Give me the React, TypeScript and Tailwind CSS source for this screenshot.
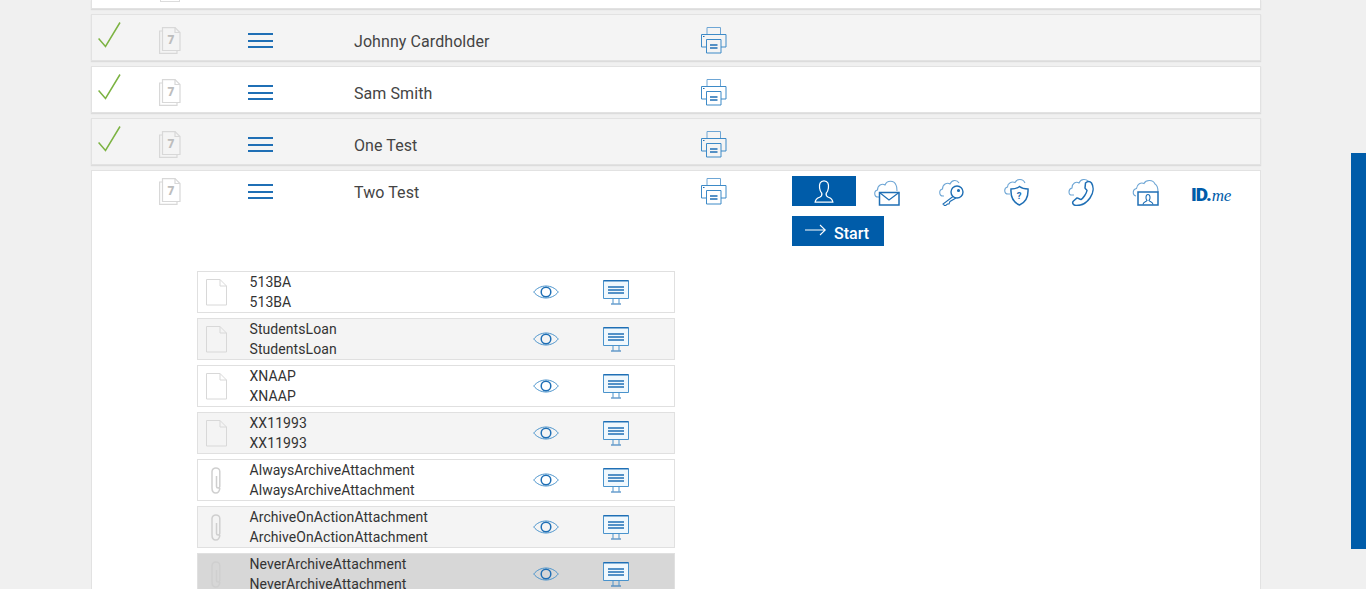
const blue = '#1f6fb5'

function Check() {
  return (
    <svg width="23" height="26" viewBox="0 0 23 26" fill="none" stroke="#7cb342" strokeWidth="1.5">
      <path d="M.6 16.5 L7.5 24.5 L22 .5" />
    </svg>
  )
}

function DocStack() {
  return (
    <svg width="22" height="27" viewBox="0 0 22 27" fill="none" stroke="#d8d8d8" strokeWidth="1.2">
      <path d="M3.5 4 H.6 V26.4 H18 V23.5" />
      <path d="M3.5 .6 H16 L21 5.5 V23.5 H3.5 Z" />
      <path d="M16 .6 V5.5 H21" />
      <text x="8.5" y="16.5" fontSize="12" fontWeight="900" fill="#bdbdbd" stroke="none" fontFamily="Roboto, sans-serif">7</text>
    </svg>
  )
}

function Menu() {
  return (
    <div className="flex flex-col gap-[4.5px] w-[25px]">
      <div className="h-[2px] bg-[#1f6fb5]" />
      <div className="h-[2px] bg-[#1f6fb5]" />
      <div className="h-[2px] bg-[#1f6fb5]" />
    </div>
  )
}

function Printer() {
  return (
    <svg width="26" height="27" viewBox="0 0 26 27" fill="none" stroke="#3d8ac7" strokeWidth="1">
      <path d="M6 7 V.5 H19.5 V7" stroke="#6ea6d5" />
      <path d="M5 20 H.5 V7.5 H25 V20 H20" />
      <path d="M5.5 12.5 H20 V26 H5.5 Z" />
      <path d="M9 18 H16.5 M9 21 H16.5" stroke={blue} strokeWidth="1.4" />
      <path d="M2 9.5 H3.5" stroke={blue} />
    </svg>
  )
}

function Icon({ children }: { children: React.ReactNode }) {
  return (
    <svg width="28" height="28" viewBox="0 0 28 28" fill="none" stroke={blue} strokeWidth="1.1">
      {children}
    </svg>
  )
}

function Person() {
  return (
    <svg width="20" height="23" viewBox="0 0 22 26" fill="none" stroke="#fff" strokeWidth="1.4">
      <path d="M11 1 C6.5 1 5.5 5 6 9 C6.4 12 7.5 14 8.5 15 C9 17 8.5 18.5 6 19.5 C3 20.5 1.5 21.5 1 25 H21 C20.5 21.5 19 20.5 16 19.5 C13.5 18.5 13 17 13.5 15 C14.5 14 15.6 12 16 9 C16.5 5 15.5 1 11 1 Z" />
    </svg>
  )
}

function CloudMail() {
  return (
    <Icon>
      <path d="M6 19 H5 C1 19 .5 13 4.5 12 C4.5 7.5 9 5 12 7 C14 2 21 2 23 7 C24 8.5 24 10 24 13" stroke="#6ea6d5" />
      <path d="M6.5 14.5 H26 V27 H6.5 Z" strokeWidth="1.5" />
      <path d="M6.5 14.5 L16 22 L26 14.5" strokeWidth="1.2" />
    </Icon>
  )
}

function CloudKey() {
  return (
    <Icon>
      <path d="M6 18 H5 C1 18 .5 12 4.5 11 C4.5 6.5 9 4 12 6 C14 1.5 19 1.5 21 5" stroke="#6ea6d5" />
      <circle cx="19" cy="14" r="6" strokeWidth="1.4" />
      <circle cx="20.5" cy="12.5" r="1" fill={blue} />
      <path d="M15 18.5 L5 26 L7 28 L9.5 26 L11 26 L12 23.5 L18 20" />
    </Icon>
  )
}

function CloudShield() {
  return (
    <Icon>
      <path d="M7 16 H5 C1 16 .5 10 4.5 9 C4.5 5 9 3 12 4.5 C14 .5 20 .5 22 5" stroke="#6ea6d5" />
      <path d="M8 11 C11 11 14 10.5 16.5 8.5 C19 10.5 22 11 25 11 C25.5 19 22.5 24.5 16.5 27 C10.5 24.5 7.5 19 8 11 Z" strokeWidth="1.5" />
      <text x="13.8" y="21" fontSize="9.5" fontWeight="700" fill={blue} stroke="none" fontFamily="Roboto, sans-serif">?</text>
    </Icon>
  )
}

function CloudPhone() {
  return (
    <Icon>
      <path d="M7 17 H5 C1 17 1 11 5 10 C5 5.5 9 3 12 5 C14 .5 19 1 21 3" stroke="#6ea6d5" />
      <path d="M18.5 5 C20.5 3 23 3 24.5 5 C27 9 26.5 15 23 20 C19.5 25 14 27.5 9.5 27.5 C6.5 27.5 4.5 25 6.5 23 L10 20 C11 19.5 12.5 21.5 14 21.5 C16 20.5 19.5 15.5 20 12.5 C19.5 11.5 18.5 11 18 10 Z" strokeWidth="1.5" />
    </Icon>
  )
}

function CloudContact() {
  return (
    <Icon>
      <path d="M4 18 C0 17 .5 11 4.5 10.5 C5 6 9 4 12 5.5 C14 1.5 21 1.5 23 6 C25 7 26 9 26 14" stroke="#6ea6d5" />
      <path d="M6 14 H26 V27 H6 Z" fill="#fff" strokeWidth="1.5" />
      <path d="M11 26.5 C11 24 14 24 15 22.5 C13.5 21 13.5 16.5 16 16.5 C18.5 16.5 18.5 21 17 22.5 C18 24 21 24 21 26.5" />
    </Icon>
  )
}

function Eye() {
  return (
    <svg width="26" height="16" viewBox="0 0 26 16" fill="none" stroke="#4a93cc" strokeWidth="1">
      <path d="M.7 8 C7 0 19 0 25.3 8 C19 16 7 16 .7 8 Z" />
      <circle cx="13" cy="8" r="4.8" stroke="#1f6fb5" strokeWidth="1.5" />
    </svg>
  )
}

function Monitor() {
  return (
    <svg width="26" height="25" viewBox="0 0 26 25" fill="none" stroke="#1f6fb5">
      <path d="M.5 .7 H25.5 V18.5 H.5 Z" fill="#f0f8fd" stroke="#4a93cc" />
      <path d="M.5 .7 H25.5" strokeWidth="1.4" />
      <path d="M5 7 H21 M5 10 H21 M5 13 H21" strokeWidth="1.4" />
      <path d="M10 18.5 V23.5 M16 18.5 V23.5" stroke="#4a93cc" />
      <path d="M8 24 H18" />
    </svg>
  )
}

function PageIcon() {
  return (
    <svg width="21" height="27" viewBox="0 0 21 27" fill="none" stroke="#d8d8d8" strokeWidth="1">
      <path d="M.5 .5 H14 L20.5 7 V26 H.5 Z" />
      <path d="M14 .5 V7 H20.5" />
    </svg>
  )
}

function Clip() {
  return (
    <svg width="10" height="27" viewBox="0 0 10 27" fill="none" stroke="#cfcfcf" strokeWidth="1.5">
      <path d="M5.5 9 V19.5 C5.5 21.5 8.8 21.5 8.8 19.5 V4.5 C8.8 -.3 1 -.3 1 4.5 V21 C1 27.7 8.8 27.7 8.8 21" />
    </svg>
  )
}

function Row({ name, alt, done = true }: { name: string; alt?: boolean; done?: boolean }) {
  return (
    <div className={`h-[47px] border border-[#e2e2e2] shadow-[0_1px_1px_#dcdcdc] flex items-start ${alt ? 'bg-[#f4f4f4]' : 'bg-white'}`}>
      <div className="w-[67px] pl-[6px] pt-[7px]">{done && <Check />}</div>
      <div className="w-[89px] pt-[12px]"><DocStack /></div>
      <div className="w-[106px] pt-[18px]"><Menu /></div>
      <div className="w-[347px] pt-[15px] text-[16px] leading-[24px] tracking-[0.08px] text-[#444]">{name}</div>
      <div className="pt-[12px]"><Printer /></div>
    </div>
  )
}

const docs = [
  { name: '513BA', icon: 'page', bg: 'bg-white' },
  { name: 'StudentsLoan', icon: 'page', bg: 'bg-[#f4f4f4]' },
  { name: 'XNAAP', icon: 'page', bg: 'bg-white' },
  { name: 'XX11993', icon: 'page', bg: 'bg-[#f4f4f4]' },
  { name: 'AlwaysArchiveAttachment', icon: 'clip', bg: 'bg-white' },
  { name: 'ArchiveOnActionAttachment', icon: 'clip', bg: 'bg-[#f4f4f4]' },
  { name: 'NeverArchiveAttachment', icon: 'clip', bg: 'bg-[#d7d7d7]' },
]

export default function App() {
  return (
    <div className="relative h-[589px] overflow-hidden bg-[#f0f0f0] [font-family:Roboto,sans-serif]">
      <div className="absolute right-0 top-[153px] w-[15px] h-[396px] bg-[#005ca9]" />

      <div className="ml-[91px] w-[1170px] flex flex-col gap-[5px]">
        <div className="h-[9px] bg-white border-x border-b border-[#e2e2e2] shadow-[0_1px_1px_#dcdcdc] overflow-hidden pl-[67px]">
          <div className="ml-[1px] w-[20px] h-[2px] border-x border-b border-[#dcdcdc]" />
        </div>
        <Row name="Johnny Cardholder" alt />
        <Row name="Sam Smith" />
        <Row name="One Test" alt />

        <div className="h-[600px] bg-white border border-[#e2e2e2]">
          <div className="flex items-start">
            <div className="w-[67px]" />
            <div className="w-[89px] pt-[7px]"><DocStack /></div>
            <div className="w-[106px] pt-[13px]"><Menu /></div>
            <div className="w-[347px] pt-[10px] text-[16px] leading-[24px] tracking-[0.08px] text-[#444]">Two Test</div>
            <div className="w-[91px] pt-[7px]"><Printer /></div>
            <div className="pt-[5px]">
              <div className="flex items-start h-[30px]">
                <div className="w-[64px] h-[30px] bg-[#005ca9] flex items-center justify-center"><Person /></div>
                <div className="w-[65px] pl-[17px] pt-[2px]"><CloudMail /></div>
                <div className="w-[65px] pl-[17px] pt-[2px]"><CloudKey /></div>
                <div className="w-[64px] pl-[17px] pt-[2px]"><CloudShield /></div>
                <div className="w-[65px] pl-[17px] pt-[2px]"><CloudPhone /></div>
                <div className="w-[76px] pl-[17px] pt-[2px]"><CloudContact /></div>
                <div className="flex items-baseline text-[#005ca9] pt-[9px] leading-[20px]">
                  <span className="text-[19px] font-black tracking-[-1px]">ID.</span>
                  <span className="ml-[1px] text-[17px] italic font-normal tracking-[-0.3px] [font-family:'Liberation_Serif',serif]">me</span>
                </div>
              </div>
              <div className="mt-[10px] w-[92px] h-[30px] bg-[#005ca9] flex items-center pl-[13px] text-white">
                <svg className="mb-[2px]" width="21" height="12" viewBox="0 0 21 12" fill="none" stroke="#fff" strokeWidth="1.1">
                  <path d="M0 6 H20 M15 1 L20.3 6 L15 11" />
                </svg>
                <span className="ml-[8px] mt-[5px] text-[16px] font-medium">Start</span>
              </div>
            </div>
          </div>

          <div className="ml-[105px] mt-[25px] w-[478px] flex flex-col gap-[5px]">
            {docs.map((d) => (
              <div key={d.name} className={`h-[42px] shrink-0 border border-[#e0e0e0] flex items-start ${d.bg}`}>
                <div className="w-[51.5px] pl-[8px] pt-[7px]">
                  {d.icon === 'page' ? <PageIcon /> : <div className="pl-[5px]"><Clip /></div>}
                </div>
                <div className="w-[283.5px] text-[14px] leading-[20px] tracking-[0.07px] text-[#333]">
                  <div>{d.name}</div>
                  <div>{d.name}</div>
                </div>
                <div className="w-[70px] pt-[12px]"><Eye /></div>
                <div className="pt-[8px]"><Monitor /></div>
              </div>
            ))}
          </div>
        </div>
      </div>
    </div>
  )
}
